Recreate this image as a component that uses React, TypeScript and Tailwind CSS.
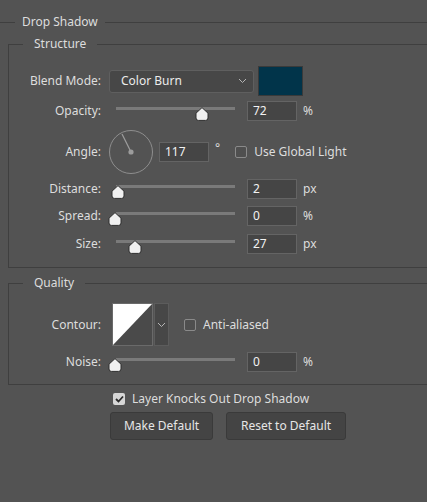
import { ReactNode } from 'react';

const font = { fontFamily: '"Noto Sans", "Open Sans", sans-serif' };

function Chevron() {
  return (
    <svg width="9" height="6" viewBox="0 0 9 6" className="shrink-0">
      <path d="M1 1 L4.5 4.5 L8 1" fill="none" stroke="#b5b5b5" strokeWidth="1" />
    </svg>
  );
}

function Thumb({ left }: { left: number }) {
  // thumb hangs under the track, tip touching it
  return (
    <svg width="14" height="14" viewBox="0 0 14 14" className="absolute top-[6px]" style={{ left: left - 7 }}>
      <path
        d="M7 0.6 L13 6.2 V11 Q13 13.4 10.6 13.4 H3.4 Q1 13.4 1 11 V6.2 Z"
        fill="#f0f0f0"
        stroke="#2e2e2e"
        strokeWidth="1"
      />
    </svg>
  );
}

function Slider({ pos }: { pos: number }) {
  return (
    <div className="relative w-[119px] h-5 ml-[15px]">
      <div className="absolute top-[6px] left-0 right-0 h-[3px] bg-[#7a7a7a]" />
      <Thumb left={pos} />
    </div>
  );
}

function NumBox({ value }: { value: string }) {
  return (
    <div className="w-[50px] h-5 bg-[#454545] border border-[#646464] pl-[5px] flex items-center text-[#f2f2f2]">
      {value}
    </div>
  );
}

function Label({ children }: { children: ReactNode }) {
  return <div className="w-[92px] shrink-0 text-right">{children}</div>;
}

function Check({ checked = false }: { checked?: boolean }) {
  if (checked) {
    return (
      <div className="w-3 h-3 rounded-[2px] bg-[#d6d6d6] flex items-center justify-center">
        <svg width="9" height="8" viewBox="0 0 9 8">
          <path d="M1 4 L3.5 6.5 L8 1.5" fill="none" stroke="#2a2a2a" strokeWidth="1.8" />
        </svg>
      </div>
    );
  }
  return <div className="w-3 h-3 rounded-[2px] border border-[#8a8a8a] bg-[#4f4f4f]" />;
}

function SliderRow({ label, pos, value, unit, className }: { label: string; pos: number; value: string; unit: string; className: string }) {
  return (
    <div className={`flex items-center h-5 ${className}`}>
      <Label>{label}</Label>
      <Slider pos={pos} />
      <div className="ml-[12px]">
        <NumBox value={value} />
      </div>
      <span className="ml-[6px]">{unit}</span>
    </div>
  );
}

export default function App() {
  return (
    <div className="w-[427px] h-[502px] bg-[#535353] text-[12px] leading-4 text-[#dddddd] overflow-hidden" style={font}>
      {/* panel title */}
      <div className="flex items-center h-4 mt-[14px]">
        <div className="w-[15px] h-px bg-[#3f3f3f]" />
        <span className="px-[7px]">Drop Shadow</span>
        <div className="flex-1 h-px bg-[#3f3f3f]" />
      </div>

      <fieldset className="ml-[8px] mt-[6px] border-l border-y border-[#3f3f3f] pb-[13px]">
        <legend className="ml-[14px] px-[11px]">Structure</legend>

        <div className="flex items-center h-[30px] mt-[14px]">
          <Label>Blend Mode:</Label>
          <div className="ml-[8px] w-[145px] h-[23px] bg-[#474747] border border-[#5f5f5f] rounded-[3px] pl-[11px] pr-[6px] flex items-center justify-between text-[#ececec]">
            <span>Color Burn</span>
            <Chevron />
          </div>
          <div className="ml-[4px] w-[45px] h-[30px] bg-[#01344a] border border-[#3a3a3a]" />
        </div>

        <SliderRow label="Opacity:" pos={86} value="72" unit="%" className="mt-[5px]" />

        <div className="flex items-center h-[44px] mt-[9px]">
          <Label>Angle:</Label>
          <svg width="44" height="44" viewBox="0 0 44 44" className="ml-[8px]">
            <circle cx="22" cy="22" r="21.5" fill="none" stroke="#8e8e8e" strokeWidth="1" />
            <line x1="22" y1="22" x2="13" y2="4" stroke="#9c9c9c" strokeWidth="1.3" />
            <circle cx="22" cy="22" r="2.6" fill="#9c9c9c" />
          </svg>
          <div className="ml-[6px]">
            <NumBox value="117" />
          </div>
          <span className="ml-[6px] self-start mt-[10px]">°</span>
          <div className="ml-[15px]">
            <Check />
          </div>
          <span className="ml-[7px]">Use Global Light</span>
        </div>

        <SliderRow label="Distance:" pos={1.5} value="2" unit="px" className="mt-[5px]" />
        <SliderRow label="Spread:" pos={-1} value="0" unit="%" className="mt-[7px]" />
        <SliderRow label="Size:" pos={19} value="27" unit="px" className="mt-[8px]" />
      </fieldset>

      <fieldset className="ml-[8px] mt-[7px] border-l border-y border-[#3f3f3f] pb-[12px]">
        <legend className="ml-[14px] px-[11px]">Quality</legend>

        <div className="flex items-center h-[43px] mt-[12px]">
          <Label>Contour:</Label>
          <div className="ml-[11px] flex h-[43px]">
            <div className="w-[41px] h-full border border-[#6a6a6a] bg-[#4a4a4a]">
              <svg width="39" height="41" viewBox="0 0 39 41" className="block">
                <polygon points="0,0 39,0 0,41" fill="#ffffff" />
              </svg>
            </div>
            <div className="ml-px w-[15px] h-full bg-[#474747] border border-[#5c5c5c] flex items-center justify-center">
              <Chevron />
            </div>
          </div>
          <div className="ml-[15px]">
            <Check />
          </div>
          <span className="ml-[7px]">Anti-aliased</span>
        </div>

        <SliderRow label="Noise:" pos={-1} value="0" unit="%" className="mt-[6px]" />
      </fieldset>

      <div className="flex items-center h-4 mt-[6px] pl-[113px]">
        <Check checked />
        <span className="ml-[7px]">Layer Knocks Out Drop Shadow</span>
      </div>

      <div className="flex gap-[13px] mt-[5px] pl-[110px]">
        <button className="w-[103px] h-[28px] bg-[#444444] border border-[#3a3a3a] rounded-[3px] text-[#e6e6e6]">
          Make Default
        </button>
        <button className="w-[120px] h-[28px] bg-[#444444] border border-[#3a3a3a] rounded-[3px] text-[#e6e6e6]">
          Reset to Default
        </button>
      </div>
    </div>
  );
}
